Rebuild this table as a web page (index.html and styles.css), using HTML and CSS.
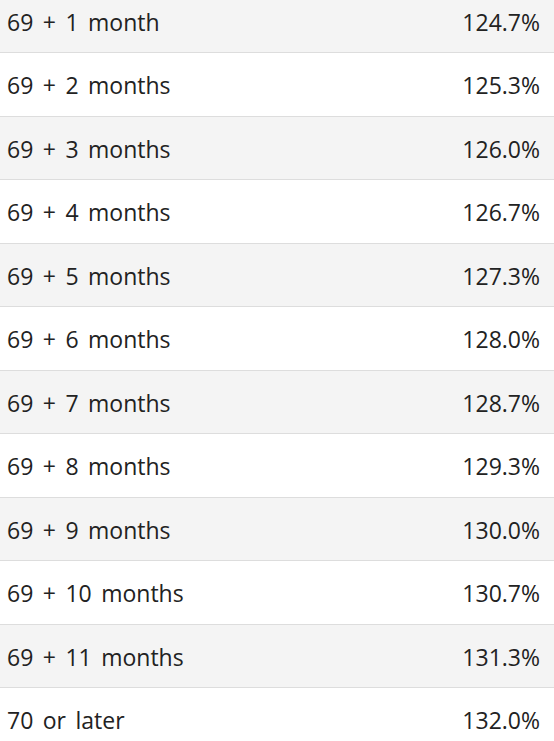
FILE: index.html
```html
<!DOCTYPE html>
<html>
<head>
<meta charset="utf-8">
<link rel="stylesheet" href="styles.css">
</head>
<body>
<div class="table">
  <div class="row alt"><span>69 + 1 month</span><span>124.7%</span></div>
  <div class="row"><span>69 + 2 months</span><span>125.3%</span></div>
  <div class="row alt"><span>69 + 3 months</span><span>126.0%</span></div>
  <div class="row"><span>69 + 4 months</span><span>126.7%</span></div>
  <div class="row alt"><span>69 + 5 months</span><span>127.3%</span></div>
  <div class="row"><span>69 + 6 months</span><span>128.0%</span></div>
  <div class="row alt"><span>69 + 7 months</span><span>128.7%</span></div>
  <div class="row"><span>69 + 8 months</span><span>129.3%</span></div>
  <div class="row alt"><span>69 + 9 months</span><span>130.0%</span></div>
  <div class="row"><span>69 + 10 months</span><span>130.7%</span></div>
  <div class="row alt"><span>69 + 11 months</span><span>131.3%</span></div>
  <div class="row"><span>70 or later</span><span>132.0%</span></div>
</div>
</body>
</html>
```
FILE: styles.css
```css
html, body {
  margin: 0;
  padding: 0;
  background: #ffffff;
  overflow: hidden;
}
.table {
  margin-top: -10.5px;
  font-family: "Open Sans", "Noto Sans", sans-serif;
  font-size: 23px;
  word-spacing: 3.5px;
  color: #222222;
}
.row {
  height: 63.5px;
  box-sizing: border-box;
  border-bottom: 1px solid #dddddd;
  display: flex;
  justify-content: space-between;
  align-items: center;
  padding: 2px 14px 0 7px;
}
.row.alt {
  background: #f4f4f4;
}
```
